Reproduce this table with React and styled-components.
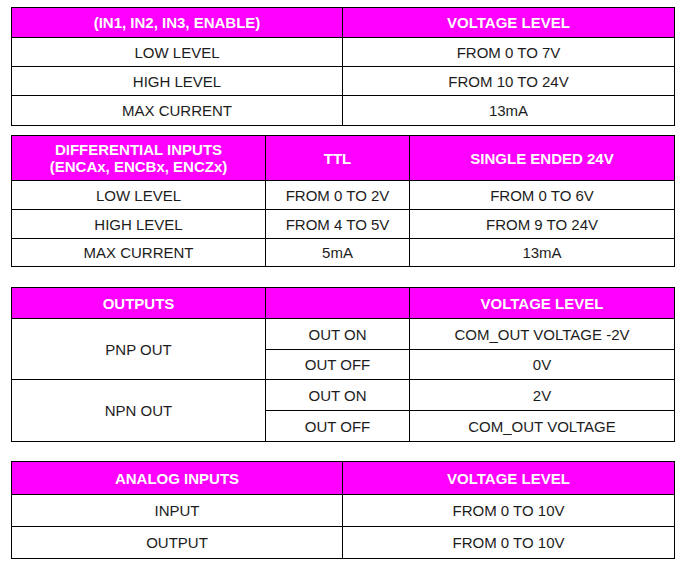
import React from "react";
import styled, { createGlobalStyle } from "styled-components";

const Global = createGlobalStyle`
  html, body { margin: 0; padding: 0; background: #ffffff; }
  body { font-family: "Liberation Sans", Arial, sans-serif; }
`;

const Page = styled.div`
  display: flex;
  flex-direction: column;
  padding: 7px 0 0 11px;
  width: 664px;
`;

const Table = styled.div`
  display: grid;
  grid-template-columns: ${(p) => p.$cols};
  grid-template-rows: ${(p) => p.$rows};
  gap: 1px;
  padding: 1px;
  background: #000;
  width: 664px;
  box-sizing: border-box;
  margin-top: ${(p) => p.$top || 0}px;
`;

const Cell = styled.div`
  display: flex;
  align-items: center;
  justify-content: center;
  text-align: center;
  background: ${(p) => (p.$head ? "#ff00ff" : "#ffffff")};
  color: ${(p) => (p.$head ? "#ffffff" : "#1c1c1c")};
  font-weight: ${(p) => (p.$head ? 700 : 400)};
  font-size: 15px;
  line-height: 17px;
  grid-row: ${(p) => (p.$span ? `span ${p.$span}` : "auto")};
`;

export default function App() {
  return (
    <>
      <Global />
      <Page>
        <Table $cols="330px 331px" $rows="29px 28px 28px 29px">
          <Cell $head>(IN1, IN2, IN3, ENABLE)</Cell>
          <Cell $head>VOLTAGE LEVEL</Cell>
          <Cell>LOW LEVEL</Cell>
          <Cell>FROM 0 TO 7V</Cell>
          <Cell>HIGH LEVEL</Cell>
          <Cell>FROM 10 TO 24V</Cell>
          <Cell>MAX CURRENT</Cell>
          <Cell>13mA</Cell>
        </Table>

        <Table $top={9} $cols="253px 143px 264px" $rows="44px 28px 28px 27px">
          <Cell $head>
            DIFFERENTIAL INPUTS
            <br />
            (ENCAx, ENCBx, ENCZx)
          </Cell>
          <Cell $head>TTL</Cell>
          <Cell $head>SINGLE ENDED 24V</Cell>
          <Cell>LOW LEVEL</Cell>
          <Cell>FROM 0 TO 2V</Cell>
          <Cell>FROM 0 TO 6V</Cell>
          <Cell>HIGH LEVEL</Cell>
          <Cell>FROM 4 TO 5V</Cell>
          <Cell>FROM 9 TO 24V</Cell>
          <Cell>MAX CURRENT</Cell>
          <Cell>5mA</Cell>
          <Cell>13mA</Cell>
        </Table>

        <Table $top={20} $cols="253px 143px 264px" $rows="30px 30px 29px 30px 30px">
          <Cell $head>OUTPUTS</Cell>
          <Cell $head />
          <Cell $head>VOLTAGE LEVEL</Cell>
          <Cell $span={2}>PNP OUT</Cell>
          <Cell>OUT ON</Cell>
          <Cell>COM_OUT VOLTAGE -2V</Cell>
          <Cell>OUT OFF</Cell>
          <Cell>0V</Cell>
          <Cell $span={2}>NPN OUT</Cell>
          <Cell>OUT ON</Cell>
          <Cell>2V</Cell>
          <Cell>OUT OFF</Cell>
          <Cell>COM_OUT VOLTAGE</Cell>
        </Table>

        <Table $top={19} $cols="330px 331px" $rows="32px 31px 31px">
          <Cell $head>ANALOG INPUTS</Cell>
          <Cell $head>VOLTAGE LEVEL</Cell>
          <Cell>INPUT</Cell>
          <Cell>FROM 0 TO 10V</Cell>
          <Cell>OUTPUT</Cell>
          <Cell>FROM 0 TO 10V</Cell>
        </Table>
      </Page>
    </>
  );
}
